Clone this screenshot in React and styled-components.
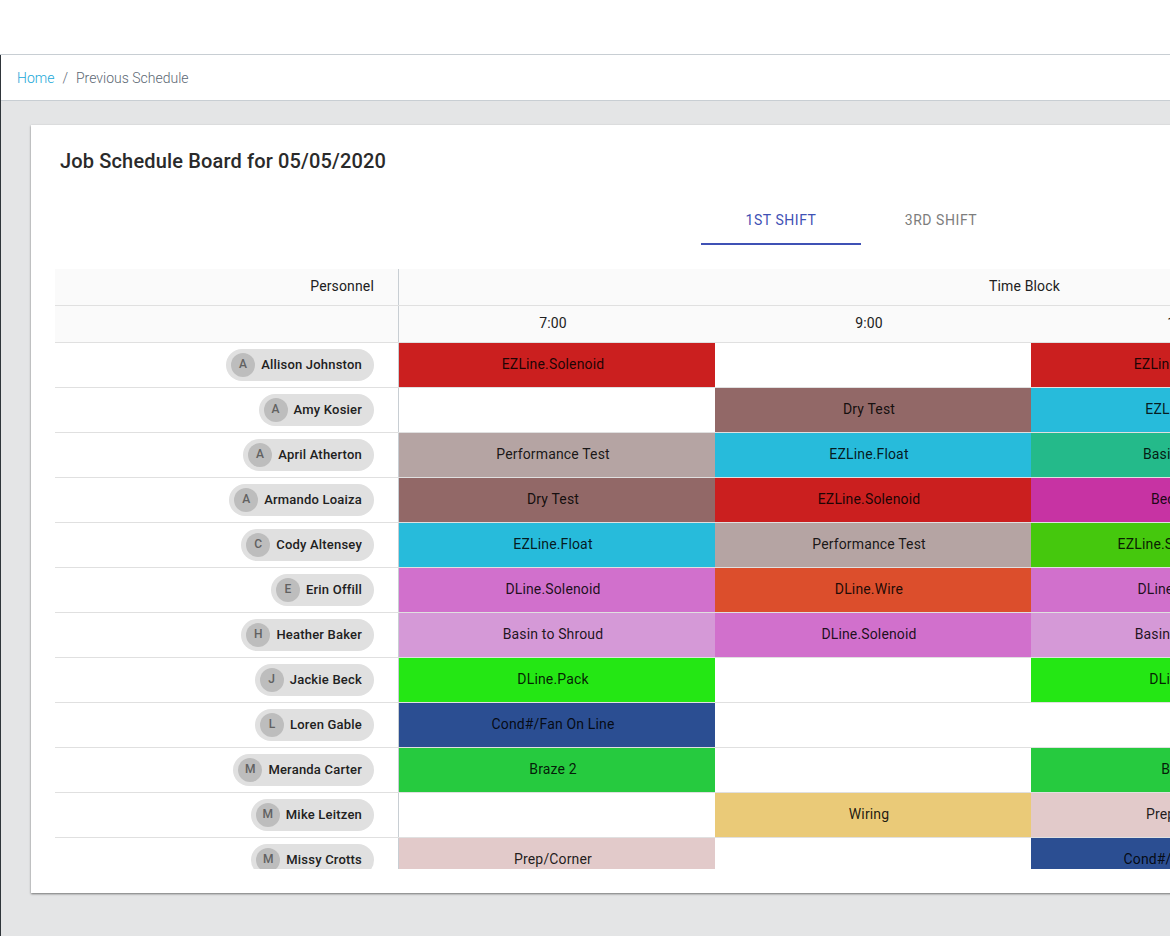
import styled, { createGlobalStyle } from 'styled-components'

const Global = createGlobalStyle`
    html, body {
        margin: 0;
        padding: 0;
        background: #fff;
        overflow: hidden;
    }
    * {
        box-sizing: border-box;
    }
`

const Page = styled.div`
    width: 1170px;
    height: 936px;
    overflow: hidden;
    display: flex;
    flex-direction: column;
    font-family: Roboto, "Liberation Sans", sans-serif;
`

const TopBar = styled.header`
    height: 55px;
    flex: none;
    background: #fff;
    border-bottom: 1px solid #c8ced3;
`

const Main = styled.main`
    flex: 1;
    display: flex;
    flex-direction: column;
    min-height: 0;
    background: #e4e5e6;
    border-left: 1px solid #2f353a;
`

const Breadcrumb = styled.nav`
    height: 46px;
    flex: none;
    display: flex;
    align-items: center;
    gap: 8px;
    padding: 0 16px;
    background: #fff;
    border-bottom: 1px solid #c8ced3;
    font-size: 14px;
    font-weight: 300;
    color: #5c6873;
`

const Crumb = styled.a`
    color: #20a8d8;
`

const Card = styled.section`
    margin: 24px 0 0 30px;
    width: 1300px;
    height: 768px;
    flex: none;
    background: #fff;
    padding: 24px;
    box-shadow: 0 1px 2px rgba(0, 0, 0, 0.5);
`

const Title = styled.h2`
    margin: 0 0 0 5px;
    font-size: 20px;
    line-height: 24px;
    font-weight: 500;
    letter-spacing: 0.15px;
    color: #2a2a2a;
`

const Tabs = styled.div`
    display: flex;
    margin: 24px 0 24px 646px;
`

const Tab = styled.div`
    width: 160px;
    height: 48px;
    display: flex;
    align-items: center;
    justify-content: center;
    font-size: 14px;
    font-weight: 400;
    letter-spacing: 0.55px;
    color: ${(p) => (p.$active ? '#3f51b5' : '#7d7d7d')};
    border-bottom: 2px solid ${(p) => (p.$active ? '#3f51b5' : 'transparent')};
`

const Table = styled.div`
    height: 600px;
    overflow: hidden;
    font-size: 14px;
    letter-spacing: 0.15px;
    color: #212121;
`

const Row = styled.div`
    display: flex;
    height: ${(p) => p.$height}px;
    border-bottom: 1px solid #e0e0e0;
    background: ${(p) => (p.$head ? '#fafafa' : '#fff')};
`

const NameCell = styled.div`
    width: 344px;
    flex: none;
    display: flex;
    align-items: center;
    justify-content: flex-end;
    padding-right: 24px;
    border-right: 1px solid #c8ced3;
    font-weight: ${(p) => (p.$head ? 400 : 500)};
`

const HeadLabel = styled.span`
    padding-bottom: 2px;
`

const HeadCell = styled.div`
    width: ${(p) => p.$width}px;
    flex: none;
    display: flex;
    align-items: center;
    justify-content: center;
    padding-right: ${(p) => (p.$slot ? 8 : 0)}px;
`

const SlotCell = styled.div`
    width: 316px;
    flex: none;
    height: 44px;
    display: flex;
    align-items: center;
    justify-content: center;
    padding: 0 8px 2px 0;
    white-space: nowrap;
    background: ${(p) => p.$color || 'transparent'};
    color: rgba(0, 0, 0, 0.87);
`

const Chip = styled.div`
    display: flex;
    align-items: center;
    height: 32px;
    padding: 0 12px 0 5px;
    border-radius: 16px;
    background: #e0e0e0;
    font-size: 13px;
    letter-spacing: 0.2px;
    font-weight: 500;
    color: #212121;
`

const ChipName = styled.span`
    padding-bottom: 2px;
`

const Avatar = styled.span`
    width: 24px;
    height: 24px;
    border-radius: 50%;
    margin-right: 6px;
    padding-bottom: 2px;
    display: flex;
    align-items: center;
    justify-content: center;
    background: #bdbdbd;
    color: #616161;
    font-size: 12px;
    font-weight: 500;
`

const colors = {
    'EZLine.Solenoid': '#cb1f1f',
    'EZLine.Float': '#27bbdb',
    'Dry Test': '#926867',
    'Performance Test': '#b5a4a3',
    'Basin to Shroud': '#d599d7',
    'DLine.Solenoid': '#d170cc',
    'DLine.Wire': '#dc4e2c',
    'DLine.Pack': '#24e714',
    'Cond#/Fan On Line': '#2b4e92',
    'Braze 2': '#26ca3f',
    Wiring: '#eaca78',
    'Prep/Corner': '#e2caca',
}

const rows = [
    ['Allison Johnston', 'EZLine.Solenoid', null, 'EZLine.Solenoid'],
    ['Amy Kosier', null, 'Dry Test', 'EZLine.Float'],
    ['April Atherton', 'Performance Test', 'EZLine.Float', ['Basin/Corner', '#24ba8a']],
    ['Armando Loaiza', 'Dry Test', 'EZLine.Solenoid', ['Bed Frame', '#c733a3']],
    ['Cody Altensey', 'EZLine.Float', 'Performance Test', ['EZLine.Shroud Install', '#45c80d']],
    ['Erin Offill', 'DLine.Solenoid', 'DLine.Wire', 'DLine.Solenoid'],
    ['Heather Baker', 'Basin to Shroud', 'DLine.Solenoid', 'Basin to Shroud'],
    ['Jackie Beck', 'DLine.Pack', null, 'DLine.Pack'],
    ['Loren Gable', 'Cond#/Fan On Line', null, null],
    ['Meranda Carter', 'Braze 2', null, 'Braze 2'],
    ['Mike Leitzen', null, 'Wiring', 'Prep/Corner'],
    ['Missy Crotts', 'Prep/Corner', null, 'Cond#/Fan On Line'],
]

const Slot = ({ job }) => {
    if (!job) return <SlotCell />
    const [label, color] = Array.isArray(job) ? job : [job, colors[job]]
    return <SlotCell $color={color}>{label}</SlotCell>
}

const App = () => {
    return (
        <Page>
            <Global />
            <TopBar />
            <Main>
                <Breadcrumb>
                    <Crumb>Home</Crumb>
                    <span>/</span>
                    <span>Previous Schedule</span>
                </Breadcrumb>
                <Card>
                    <Title>Job Schedule Board for 05/05/2020</Title>
                    <Tabs>
                        <Tab $active>1ST SHIFT</Tab>
                        <Tab>3RD SHIFT</Tab>
                    </Tabs>
                    <Table>
                        <Row $head $height={37}>
                            <NameCell $head><HeadLabel>Personnel</HeadLabel></NameCell>
                            <HeadCell $width={1251}><HeadLabel>Time Block</HeadLabel></HeadCell>
                        </Row>
                        <Row $head $height={37}>
                            <NameCell $head />
                            <HeadCell $slot $width={316}><HeadLabel>7:00</HeadLabel></HeadCell>
                            <HeadCell $slot $width={316}><HeadLabel>9:00</HeadLabel></HeadCell>
                            <HeadCell $slot $width={316}><HeadLabel>11:00</HeadLabel></HeadCell>
                        </Row>
                        {rows.map(([name, a, b, c]) => (
                            <Row key={name} $height={45}>
                                <NameCell>
                                    <Chip>
                                        <Avatar>{name[0]}</Avatar>
                                        <ChipName>{name}</ChipName>
                                    </Chip>
                                </NameCell>
                                <Slot job={a} />
                                <Slot job={b} />
                                <Slot job={c} />
                            </Row>
                        ))}
                    </Table>
                </Card>
            </Main>
        </Page>
    )
}

export default App
